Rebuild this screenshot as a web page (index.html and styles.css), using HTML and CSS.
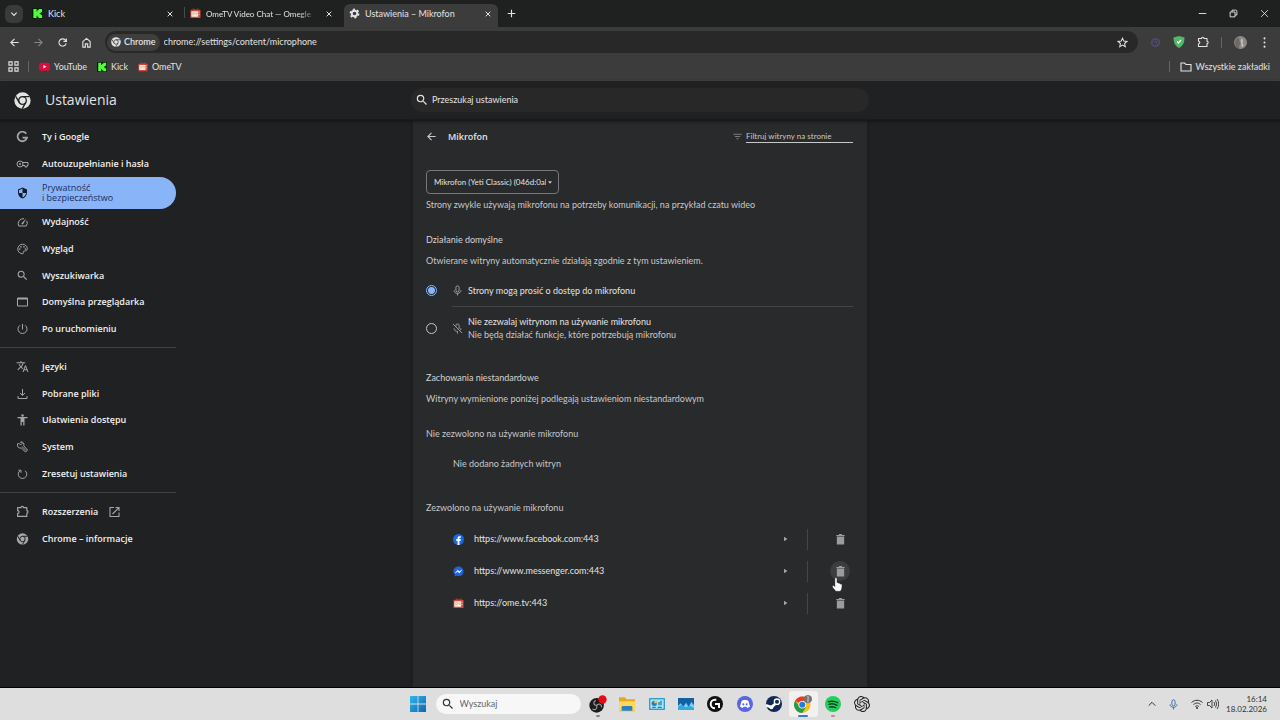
FILE: index.html
```html
<!DOCTYPE html>
<html lang="pl">
<head>
<meta charset="utf-8">
<meta name="viewport" content="width=device-width, initial-scale=1">
<title>Ustawienia – Mikrofon</title>
<link rel="stylesheet" href="styles.css">
</head>
<body>
<svg class="defs" aria-hidden="true">
  <symbol id="close" viewBox="0 0 24 24"><path d="M5 5l14 14M19 5L5 19" fill="none" stroke="currentColor" stroke-width="3"/></symbol>
  <symbol id="back" viewBox="0 0 24 24"><path d="M21 12H4M12 4l-8 8 8 8" fill="none" stroke="currentColor" stroke-width="2.4"/></symbol>
  <symbol id="chrome" viewBox="0 0 24 24"><circle cx="12" cy="12" r="11.500" fill="currentColor"/><g fill="none" stroke="var(--cut)" stroke-width="1.900"><circle cx="12" cy="12" r="5.400"/><path d="M12 6.600h10M16.700 14.700l-5 8.700M7.300 14.700l-5-8.700"/></g></symbol>
  <symbol id="search" viewBox="0 0 24 24"><path d="M15.5 14h-.79l-.28-.27A6.47 6.47 0 0 0 16 9.5 6.5 6.5 0 1 0 9.5 16c1.61 0 3.09-.59 4.23-1.57l.27.28v.79l5 4.99L20.49 19l-4.99-5zm-6 0C7.01 14 5 11.99 5 9.5S7.01 5 9.5 5 14 7.01 14 9.5 11.99 14 9.5 14z" fill="currentColor"/></symbol>
  <symbol id="puzzle" viewBox="0 0 24 24"><path d="M3 5h6c0-3.500 5-3.500 5 0h6v5.500c3 0 3 4.500 0 4.500v6H3v-5.500c3.500 0 3.500-5 0-5z" fill="none" stroke="currentColor" stroke-width="2.200" stroke-linejoin="round"/></symbol>
  <symbol id="kick" viewBox="0 0 24 24"><rect width="24" height="24" rx="2" fill="#051c04"/><path d="M3 2h7v5h2V4h3V2h7v7h-3v2h-2v2h2v2h3v7h-7v-2h-3v-3h-2v5H3z" fill="#53fc3b"/></symbol>
  <symbol id="ometv" viewBox="0 0 24 24"><path d="M7 1l4 4h3l4-4" fill="none" stroke="#d84b3e" stroke-width="2"/><rect x="1" y="4" width="22" height="18" rx="2" fill="#cf4a3c"/><rect x="3" y="7" width="15" height="12" rx="1" fill="#fff0df"/><path d="M5 10h3v5H5zM10 15v-5l2 3 2-3v5M16 10v5" fill="none" stroke="#e5a48f" stroke-width="1.200"/><path d="M20 8v2M20 13v2" stroke="#ffd6c9" stroke-width="2"/></symbol>
  <symbol id="mic" viewBox="0 0 24 24"><rect x="8.500" y="2" width="7" height="13" rx="3.500" fill="none" stroke="currentColor" stroke-width="2"/><path d="M4.500 11.500c0 9 15 9 15 0M12 18v5" fill="none" stroke="currentColor" stroke-width="2"/></symbol>
  <symbol id="trash" viewBox="0 0 24 24"><path d="M3 2h5l1-2h6l1 2h5v3H3zM4 6h16v17H4z" fill="currentColor"/></symbol>
  <symbol id="caret" viewBox="0 0 24 24"><path d="M5 1l16 11L5 23z" fill="currentColor"/></symbol>
</svg>

<header class="browser">
  <div class="tabstrip">
    <button class="tab-search" aria-label="Wyszukaj karty"><svg class="i8" viewBox="0 0 24 24"><path d="M4 8l8 8 8-8" fill="none" stroke="currentColor" stroke-width="3.500"/></svg></button>
    <div class="tab"><svg class="i11"><use href="#kick"/></svg><span class="tab-title">Kick</span><button class="plain" aria-label="Zamknij Kick"><svg class="i8"><use href="#close"/></svg></button></div>
    <div class="tab second"><svg class="i11"><use href="#ometv"/></svg><span class="tab-title fade">OmeTV Video Chat — Omegle</span><button class="plain" aria-label="Zamknij OmeTV"><svg class="i8"><use href="#close"/></svg></button></div>
    <div class="tab active"><svg class="i11" viewBox="0 0 24 24"><circle cx="12" cy="12" r="6" fill="none" stroke="currentColor" stroke-width="4"/><circle cx="12" cy="12" r="9" fill="none" stroke="currentColor" stroke-width="3.500" stroke-dasharray="4.700 4.700"/></svg><span class="tab-title">Ustawienia – Mikrofon</span><button class="plain" aria-label="Zamknij Ustawienia"><svg class="i8"><use href="#close"/></svg></button></div>
    <button class="plain new-tab" aria-label="Nowa karta"><svg class="i9" viewBox="0 0 24 24"><path d="M12 2v20M2 12h20" stroke="currentColor" stroke-width="3"/></svg></button>
    <div class="window-controls">
      <button class="plain" aria-label="Minimalizuj"><svg class="i9" viewBox="0 0 24 24"><path d="M2 12h20" stroke="currentColor" stroke-width="2.500"/></svg></button>
      <button class="plain" aria-label="Przywróć"><svg class="i9" viewBox="0 0 24 24"><path d="M3 8h13v13H3zM8 8V3h10c2 0 3 1 3 3v10h-5" fill="none" stroke="currentColor" stroke-width="2.500"/></svg></button>
      <button class="plain" aria-label="Zamknij"><svg class="i9" viewBox="0 0 24 24"><path d="M3 3l18 18M21 3L3 21" stroke="currentColor" stroke-width="2.300"/></svg></button>
    </div>
  </div>
  <div class="toolbar">
    <div class="nav">
      <button class="plain" aria-label="Wstecz"><svg class="i11"><use href="#back"/></svg></button>
      <button class="plain off flip" aria-label="Dalej"><svg class="i11"><use href="#back"/></svg></button>
      <button class="plain" aria-label="Odśwież"><svg class="i11" viewBox="0 0 24 24"><path d="M20 14a8 8 0 1 1-2-7.500L20 9M20.500 3v6.500H14" fill="none" stroke="currentColor" stroke-width="2.400"/></svg></button>
      <button class="plain" aria-label="Strona główna"><svg class="i11" viewBox="0 0 24 24"><path d="M4 10l8-7 8 7v12h-5.500v-7h-5v7H4z" fill="none" stroke="currentColor" stroke-width="2.400"/></svg></button>
    </div>
    <div class="omnibox">
      <span class="chip"><svg class="i10"><use href="#chrome"/></svg>Chrome</span>
      <input class="url" aria-label="Adres" value="chrome://settings/content/microphone">
      <button class="plain" aria-label="Dodaj do zakładek"><svg class="i11" viewBox="0 0 24 24"><path d="M12 2.500l2.800 6.400 7 .7-5.300 4.600 1.600 6.800-6.100-3.600L5.900 21l1.600-6.800-5.300-4.600 7-.7z" fill="none" stroke="currentColor" stroke-width="2.200"/></svg></button>
    </div>
    <div class="extensions">
      <svg class="i11" viewBox="0 0 24 24"><circle cx="12" cy="12" r="8" fill="#3a3945" stroke="#504b68" stroke-width="4"/><path d="M9 12a3 3 0 1 1 3 3" fill="none" stroke="#62597c" stroke-width="2"/></svg>
      <svg class="i12" viewBox="0 0 24 24"><path d="M12 0l11 3c0 10-3 17-11 21C4 20 1 13 1 3z" fill="#50b866"/><path d="M8 11l3 3 5-6" fill="none" stroke="#fff" stroke-width="2.500"/></svg>
      <button class="plain" aria-label="Rozszerzenia"><svg class="i12"><use href="#puzzle"/></svg></button>
      <span class="vline"></span>
      <button class="plain" aria-label="Profil"><svg class="i13" viewBox="0 0 24 24"><circle cx="12" cy="12" r="12" fill="#8d8985"/><path d="M7 3c5 1 2 5 4 8s-3 6-1 12H8C0 19 0 8 7 3z" fill="#6d6966"/><path d="M14 4c4 4 1 7 3 11s-2 5-3 5 1-6-1-9 1-4 1-7z" fill="#c8c3bd"/></svg></button>
      <button class="plain" aria-label="Menu"><svg class="i11" viewBox="0 0 24 24"><g fill="currentColor"><circle cx="12" cy="3" r="2.200"/><circle cx="12" cy="12" r="2.200"/><circle cx="12" cy="21" r="2.200"/></g></svg></button>
    </div>
  </div>
  <nav class="bookmarks" aria-label="Zakładki">
    <button class="plain" aria-label="Aplikacje"><svg class="i11" viewBox="0 0 24 24"><path d="M2 2h7v7H2zM15 2h7v7h-7zM2 15h7v7H2zM15 15h7v7h-7z" fill="none" stroke="currentColor" stroke-width="2.400"/></svg></button>
    <span class="vline"></span>
    <a href="#"><svg class="i11" viewBox="0 0 24 24"><rect x="0" y="4" width="24" height="17" rx="4" fill="#e0093a"/><path d="M9.500 8.500v8l7-4z" fill="#fff"/></svg>YouTube</a>
    <a href="#"><svg class="i10"><use href="#kick"/></svg>Kick</a>
    <a href="#"><svg class="i10"><use href="#ometv"/></svg>OmeTV</a>
    <span class="spacer"></span>
    <span class="vline"></span>
    <a class="all" href="#"><svg class="i12" viewBox="0 0 24 24"><path d="M2 4h7l3 3h10v13H2z" fill="none" stroke="currentColor" stroke-width="2.200"/></svg>Wszystkie zakładki</a>
  </nav>
</header>

<div class="app-header">
  <div class="brand"><svg class="i17"><use href="#chrome"/></svg><h1>Ustawienia</h1></div>
  <label class="search"><svg class="i14"><use href="#search"/></svg><input type="search" placeholder="Przeszukaj ustawienia" aria-label="Przeszukaj ustawienia"></label>
</div>

<div class="page">
  <nav class="sidebar" aria-label="Ustawienia">
    <div class="group first">
      <a href="#"><svg class="i12" viewBox="0 0 24 24"><path d="M19.500 5.500A9.500 9.500 0 1 0 21 13h-9" fill="none" stroke="currentColor" stroke-width="3.500"/></svg>Ty i Google</a>
      <a href="#"><svg class="i12" viewBox="0 0 24 24"><circle cx="7" cy="12" r="6" fill="none" stroke="currentColor" stroke-width="2"/><circle cx="7" cy="12" r="2" fill="currentColor"/><path d="M12.500 9H23v6h-2v3h-4v-3h-4.500" fill="none" stroke="currentColor" stroke-width="2"/></svg>Autouzupełnianie i hasła</a>
    </div>
    <a class="current" href="#" aria-current="page"><svg class="i12" viewBox="0 0 24 24"><path d="M12 1L3 5v6c0 5.550 3.840 10.740 9 12 5.160-1.260 9-6.450 9-12V5zm0 11h7c-.5 4-3.200 7.800-7 9v-9H5V6.300l7-3.100z" fill="currentColor"/></svg><span>Prywatność<br>i bezpieczeństwo</span></a>
    <div class="group">
      <a href="#"><svg class="i12" viewBox="0 0 24 24"><path d="M15 5.500A10 10 0 0 0 4.500 20h15a10 10 0 0 0 1-10.500" fill="none" stroke="currentColor" stroke-width="2"/><path d="M10.500 14l9-9-6 11c-2 2-5 0-3-2z" fill="currentColor"/></svg>Wydajność</a>
      <a href="#"><svg class="i12" viewBox="0 0 24 24"><path d="M12 2.500a9.500 9.500 0 0 0 0 19c3 0 1-3 1.500-4.500 1-2 8 1 8-6 0-5-4.500-8.500-9.500-8.500z" fill="none" stroke="currentColor" stroke-width="2"/><g fill="currentColor"><circle cx="6.500" cy="12" r="1.700"/><circle cx="9" cy="7.500" r="1.700"/><circle cx="15" cy="7.500" r="1.700"/><circle cx="18" cy="12" r="1.700"/></g></svg>Wygląd</a>
      <a href="#"><svg class="i13"><use href="#search"/></svg>Wyszukiwarka</a>
      <a href="#"><svg class="i12" viewBox="0 0 24 24"><path d="M2 4h20v16H2z" fill="none" stroke="currentColor" stroke-width="2"/><path d="M2 5.500h20" stroke="currentColor" stroke-width="3"/></svg>Domyślna przeglądarka</a>
      <a href="#"><svg class="i12" viewBox="0 0 24 24"><path d="M12 2v11M7 4.500a9 9 0 1 0 10 0" fill="none" stroke="currentColor" stroke-width="2"/></svg>Po uruchomieniu</a>
    </div>
    <hr>
    <div class="group tools">
      <a href="#"><svg class="i13" viewBox="0 0 24 24"><path d="M12.870 15.070l-2.540-2.510.03-.03A17.520 17.520 0 0 0 14.070 6H17V4h-7V2H8v2H1v2h11.170C11.500 7.920 10.440 9.750 9 11.350 8.070 10.320 7.300 9.190 6.690 8h-2c.73 1.630 1.730 3.170 2.980 4.560l-5.090 5.020L4 19l5-5 3.110 3.110zM18.500 10h-2L12 22h2l1.120-3h4.750L21 22h2zm-2.620 7l1.620-4.330L19.120 17z" fill="currentColor"/></svg>Języki</a>
      <a href="#"><svg class="i12" viewBox="0 0 24 24"><path d="M12 2v12M7 10l5 5 5-5M3 16v5h18v-5" fill="none" stroke="currentColor" stroke-width="2"/></svg>Pobrane pliki</a>
      <a href="#"><svg class="i12" viewBox="0 0 24 24"><circle cx="12" cy="3" r="2.500" fill="currentColor"/><path d="M2 6h20v2.500h-6V23h-2.500v-7h-3v7H8V8.500H2z" fill="currentColor"/></svg>Ułatwienia dostępu</a>
      <a href="#"><svg class="i12" viewBox="0 0 24 24"><path d="M4 4l4 4 3-3-3-3c5-1 8 3 6.500 7.500L22 18l-4 4-8.500-8C4 15 1 11 2 6z" fill="none" stroke="currentColor" stroke-width="2"/><path d="M11 11l8 8" stroke="currentColor" stroke-width="2"/></svg>System</a>
      <a href="#"><svg class="i12" viewBox="0 0 24 24"><path d="M7 5.500A8.500 8.500 0 1 0 17 5.500M4 4.500h5v5" fill="none" stroke="currentColor" stroke-width="2"/></svg>Zresetuj ustawienia</a>
    </div>
    <hr>
    <div class="group last">
      <a href="#"><svg class="i13"><use href="#puzzle"/></svg>Rozszerzenia<svg class="i12" viewBox="0 0 24 24"><path d="M11 3H3v18h18v-8M14 3h7v7M21 3L8 16" fill="none" stroke="currentColor" stroke-width="2.200"/></svg></a>
      <a href="#"><svg class="i12"><use href="#chrome"/></svg>Chrome – informacje</a>
    </div>
  </nav>

  <main class="card">
    <div class="card-head">
      <button class="plain" aria-label="Wstecz"><svg class="i11"><use href="#back"/></svg></button>
      <h2>Mikrofon</h2>
      <label class="filter"><svg class="i9" viewBox="0 0 24 24"><path d="M1 6h22M5 12h14M9 18h6" stroke="currentColor" stroke-width="2.400"/></svg><input type="text" placeholder="Filtruj witryny na stronie" aria-label="Filtruj witryny na stronie"></label>
    </div>
    <div class="select"><select aria-label="Mikrofon"><option>Mikrofon (Yeti Classic) (046d:0ab7)</option></select><svg viewBox="0 0 10 6"><path d="M0 0h10L5 6z" fill="currentColor"/></svg></div>
    <p class="intro">Strony zwykle używają mikrofonu na potrzeby komunikacji, na przykład czatu wideo</p>

    <h3>Działanie domyślne</h3>
    <p>Otwierane witryny automatycznie działają zgodnie z tym ustawieniem.</p>
    <div class="options">
      <label class="option"><input type="radio" name="mic" checked><span class="option-body ruled"><svg class="i11"><use href="#mic"/></svg><span>Strony mogą prosić o dostęp do mikrofonu</span></span></label>
      <label class="option"><input type="radio" name="mic"><span class="option-body"><svg class="i11" viewBox="0 0 24 24"><use href="#mic" width="24" height="24"/><path d="M2 4l19 19" stroke="#292a2b" stroke-width="5"/><path d="M2 2l20 20" stroke="currentColor" stroke-width="2"/></svg><span>Nie zezwalaj witrynom na używanie mikrofonu<small>Nie będą działać funkcje, które potrzebują mikrofonu</small></span></span></label>
    </div>

    <h3>Zachowania niestandardowe</h3>
    <p>Witryny wymienione poniżej podlegają ustawieniom niestandardowym</p>
    <h4>Nie zezwolono na używanie mikrofonu</h4>
    <p class="empty">Nie dodano żadnych witryn</p>
    <h4 class="allowed">Zezwolono na używanie mikrofonu</h4>
    <ul class="sites">
      <li><svg class="i11" viewBox="0 0 24 24"><circle cx="12" cy="12" r="12" fill="#1769e0"/><path d="M10 24v-9H7v-4h3V9c0-4 2-5 7-4v3c-3 0-3 0-3 3h3l-.6 4H14v9z" fill="#fff"/></svg><span>https://www.facebook.com:443</span><button class="plain" aria-label="Szczegóły facebook.com"><svg class="caret"><use href="#caret"/></svg></button><span class="vline"></span><button class="delete" aria-label="Usuń facebook.com"><svg class="i11"><use href="#trash"/></svg></button></li>
      <li><svg class="i11" viewBox="0 0 24 24"><path d="M12 1C5 1 1 6 1 12c0 3 1 5 3 7v4l4-2c9 3 15-2 15-9S18 1 12 1z" fill="#1f63e3"/><path d="M5 15l5-6 4 3 5-3-5 6-4-3z" fill="#fff" stroke="#fff"/></svg><span>https://www.messenger.com:443</span><button class="plain" aria-label="Szczegóły messenger.com"><svg class="caret"><use href="#caret"/></svg></button><span class="vline"></span><button class="delete hovered" aria-label="Usuń messenger.com"><svg class="i11"><use href="#trash"/></svg><svg class="pointer" viewBox="0 0 24 36"><path d="M7 3c0-3 5-3 5 0v10c1-2 4-1 4 1 1-1 4 0 4 2 2-1 4 0 4 2 0 8-1 11-4 15H9C6 28 1 25 1 21c0-3 4-2 6 1z" fill="#fff" stroke="#222" stroke-width="1"/></svg></button></li>
      <li><svg class="i11"><use href="#ometv"/></svg><span>https://ome.tv:443</span><button class="plain" aria-label="Szczegóły ome.tv"><svg class="caret"><use href="#caret"/></svg></button><span class="vline"></span><button class="delete" aria-label="Usuń ome.tv"><svg class="i11"><use href="#trash"/></svg></button></li>
    </ul>
  </main>
</div>

<footer class="taskbar">
  <div class="dock">
    <button class="task start" aria-label="Start"><svg class="i16" viewBox="0 0 24 24"><defs><linearGradient id="win" x2="1" y2="1"><stop stop-color="#35b5e8"/><stop offset="1" stop-color="#0868b8"/></linearGradient></defs><path d="M0 0h11.400v11.400H0zM12.600 0H24v11.400H12.600zM0 12.600h11.400V24H0zM12.600 12.600H24V24H12.600z" fill="url(#win)"/></svg></button>
    <label class="task-search"><svg class="i14"><use href="#search"/></svg><input type="search" placeholder="Wyszukaj" aria-label="Wyszukaj"></label>
    <div class="apps">
      <button class="task running" aria-label="OBS"><svg class="i18" viewBox="0 0 26 26"><circle cx="11" cy="15" r="10.500" fill="#1c1c1c"/><path d="M11 15c-5 0-5-6-1-7M11 15c3-4 8-1 7 3M11 15c2 4-2 8-6 5" fill="none" stroke="#999" stroke-width="1.700"/><circle cx="19.500" cy="6.500" r="6" fill="#e40b16"/></svg></button>
      <button class="task" aria-label="Eksplorator"><svg class="i16" viewBox="0 0 24 24"><path d="M0 2h9l2 3h13v18H0z" fill="#e9a71d"/><path d="M0 8h24v14H0z" fill="#ffd75b"/><path d="M4 22v-5q0-2 2-2h12q2 0 2 2v5z" fill="#2583c4"/></svg></button>
      <button class="task" aria-label="Panel sterowania"><svg class="i16" viewBox="0 0 24 24"><rect x="0" y="3" width="24" height="18" rx="1" fill="#2f9fc9"/><rect x="2" y="5" width="20" height="14" fill="#a9e3f5"/><circle cx="8" cy="11" r="4" fill="#277fb0"/><path d="M8 11V7a4 4 0 0 1 4 4z" fill="#ffbd5b"/><path d="M15 14V9M18 14V7M5 17h5M13 17h6" stroke="#277fb0" stroke-width="2"/></svg></button>
      <button class="task" aria-label="Monitor"><svg class="i16" viewBox="0 0 24 24"><path d="M0 3h24v18H0z" fill="#75d0f3"/><path d="M0 3h24v11l-4-5-4 7-4-6-4 6-4-5-4 4z" fill="#1261a5"/><path d="M0 16l5-3 6 4 7-2 6 3v3H0z" fill="#36a8df"/></svg></button>
      <button class="task" aria-label="Logitech G HUB"><svg class="i16" viewBox="0 0 24 24"><circle cx="12" cy="12" r="12" fill="#101010"/><path d="M14 5.500h-2a6.500 6.500 0 0 0 0 13M12 12h6v6" fill="none" stroke="#fff" stroke-width="3"/></svg></button>
      <button class="task" aria-label="Discord"><svg class="i16" viewBox="0 0 24 24"><circle cx="12" cy="12" r="12" fill="#5865e5"/><path d="M7 7l3-1h4l3 1 2.500 9-4 2-1.500-2h-4l-1.500 2-4-2z" fill="#fff"/><circle cx="9.500" cy="12.500" r="1.600" fill="#5865e5"/><circle cx="14.500" cy="12.500" r="1.600" fill="#5865e5"/></svg></button>
      <button class="task" aria-label="Steam"><svg class="i16" viewBox="0 0 24 24"><circle cx="12" cy="12" r="12" fill="#102a55"/><path d="M0 14l8 3 9-8" fill="none" stroke="#fff" stroke-width="4"/><circle cx="16.500" cy="8.500" r="4" fill="#102a55" stroke="#fff" stroke-width="2"/><circle cx="8" cy="17" r="3" fill="#fff"/></svg></button>
      <button class="task selected" aria-label="Chrome"><svg class="i18" viewBox="0 0 24 24"><circle cx="11" cy="13" r="11" fill="#fbc116"/><path d="M11 13L1.500 7.500A11 11 0 0 1 20.500 7.500H11z" fill="#e33b2e"/><path d="M1.500 7.500A11 11 0 0 0 11 24l5-8-9-1z" fill="#229a50"/><circle cx="11" cy="13" r="5" fill="#fff"/><circle cx="11" cy="13" r="4" fill="#267bdc"/><circle cx="18.500" cy="5.500" r="5.500" fill="#77706c"/><path d="M18 1c3 3-1 5 1 9" fill="none" stroke="#b8b1aa" stroke-width="2"/></svg></button>
      <button class="task running pink" aria-label="Spotify"><svg class="i16" viewBox="0 0 24 24"><circle cx="12" cy="12" r="12" fill="#23cf5f"/><path d="M5 8.500q8-2 14 1.500M6 12.500q6-2 12 1.500M7 16.500q5-1 9 1" fill="none" stroke="#083f1d" stroke-width="2.200" stroke-linecap="round"/></svg></button>
      <button class="task" aria-label="ChatGPT"><svg class="i16" viewBox="0 0 24 24"><path d="M22.280 9.820a5.980 5.980 0 0 0-.52-4.910 6.050 6.050 0 0 0-6.510-2.900A6.070 6.070 0 0 0 4.980 4.180a5.980 5.980 0 0 0-4 2.900 6.050 6.050 0 0 0 .75 7.100 5.980 5.980 0 0 0 .51 4.910 6.050 6.050 0 0 0 6.510 2.900A5.980 5.980 0 0 0 13.260 24a6.060 6.060 0 0 0 5.770-4.210 5.990 5.990 0 0 0 4-2.900 6.060 6.060 0 0 0-.75-7.070zm-9.020 12.610a4.480 4.480 0 0 1-2.880-1.040l.14-.08 4.780-2.760a.8.8 0 0 0 .39-.68v-6.740l2.020 1.170.04.05v5.580a4.500 4.500 0 0 1-4.490 4.500zM3.600 18.300a4.470 4.470 0 0 1-.54-3.010l.14.090 4.780 2.760a.77.77 0 0 0 .78 0l5.850-3.370v2.330l-.04.060-4.830 2.790A4.500 4.500 0 0 1 3.600 18.300zM2.340 7.900a4.490 4.490 0 0 1 2.370-1.970V11.600a.77.77 0 0 0 .39.68l5.810 3.350-2.020 1.170h-.07l-4.830-2.790A4.500 4.500 0 0 1 2.340 7.900zm16.600 3.860L13.100 8.360 15.120 7.200h.07l4.830 2.790a4.490 4.490 0 0 1-.68 8.100v-5.680a.79.79 0 0 0-.4-.65zm2.010-3.020l-.14-.09-4.770-2.780a.78.780 0 0 0-.79 0L9.410 9.230V6.900l.03-.06 4.830-2.790a4.500 4.500 0 0 1 6.680 4.660zM8.310 12.860l-2.020-1.160-.04-.06V6.070a4.500 4.500 0 0 1 7.380-3.450l-.14.080L8.710 5.460a.8.800 0 0 0-.4.680zm1.090-2.360L12 9l2.610 1.500v3L12 15l-2.600-1.500z" fill="#222"/></svg></button>
    </div>
  </div>
  <div class="tray">
    <svg class="i8" viewBox="0 0 24 24"><path d="M2 17L12 7l10 10" fill="none" stroke="currentColor" stroke-width="3"/></svg>
    <svg class="i11 tray-mic"><use href="#mic"/></svg>
    <svg class="i12" viewBox="0 0 24 24"><path d="M1 9c7-6 15-6 22 0M5 13c5-4 9-4 14 0M8.500 17c3-2 4-2 7 0" fill="none" stroke="currentColor" stroke-width="2"/><circle cx="12" cy="20" r="2" fill="currentColor"/></svg>
    <svg class="i12" viewBox="0 0 24 24"><path d="M1 9h4l5-5v16l-5-5H1zM14 8q3 4 0 8M17 5q5 7 0 14M20 2q7 10 0 20" fill="none" stroke="currentColor" stroke-width="1.800"/></svg>
    <time>16:14<br>18.02.2026</time>
  </div>
</footer>
</body>
</html>
```
FILE: styles.css
```css
* { box-sizing: border-box; }
body {
  --cut: #202122;
  margin: 0;
  min-height: 100vh;
  display: flex;
  flex-direction: column;
  background: #202122;
  color: #e3e3e3;
  font: 9px/12px Lato, "Noto Sans", sans-serif;
}
h1, h2, h3, h4, p, ul { margin: 0; padding: 0; }
ul { list-style: none; }
a { color: inherit; text-decoration: none; }
svg { display: block; flex: none; }
input, select, button { font: inherit; color: inherit; margin: 0; }
input::placeholder { color: inherit; opacity: 1; }
input[type="search"], input[type="text"], .url {
  min-width: 0; flex: 1; padding: 0; border: 0; outline: 0; background: none; appearance: none;
}
.defs { position: absolute; width: 0; height: 0; }
.i8 { width: 8px; height: 8px; }
.i9 { width: 9px; height: 9px; }
.i10 { width: 10px; height: 10px; }
.i11 { width: 11px; height: 11px; }
.i12 { width: 12px; height: 12px; }
.i13 { width: 13px; height: 13px; }
.i14 { width: 14px; height: 14px; }
.i16 { width: 16px; height: 16px; }
.i17 { width: 17px; height: 17px; }
.i18 { width: 18px; height: 18px; }
.plain { display: grid; place-items: center; padding: 0; border: 0; background: none; }
.vline { width: 1px; height: 11px; background: #656565; }
.spacer { flex: 1; }

.browser { background: #3c3c3c; border-bottom: 1px solid #484848; }
.tabstrip { display: flex; align-items: center; height: 27px; padding-left: 5px; background: #1f2020; }
.tab-search { display: grid; place-items: center; width: 18px; height: 18px; padding: 0; border: 0; border-radius: 6px; background: #3a3a3a; }
.tab { display: flex; align-items: center; gap: 5px; flex: 0 1 161px; min-width: 0; height: 23px; margin-top: 4px; padding: 0 10px 4px 9px; }
.tab.second { flex-basis: 158px; padding: 0 9px 4px 5px; border-left: 1px solid transparent; border-image: linear-gradient(transparent 4px, #4a4a4a 4px 14px, transparent 14px) 1; }
.tab.active { flex-basis: 154px; margin-left: 2px; padding: 0 6px 4px 5px; border-radius: 6px 6px 0 0; background: #3c3c3c; }
.tab-title { flex: 1; min-width: 0; overflow: hidden; white-space: nowrap; }
.fade { font-size: 8px; mask-image: linear-gradient(90deg, #000 80%, transparent); }
.new-tab { margin-left: 9px; }
.window-controls { display: flex; gap: 22px; margin-left: auto; padding-right: 11px; }

.toolbar { display: flex; align-items: center; padding: 4px 10px 0 9px; }
.nav { display: flex; gap: 13px; width: 96px; }
.off { color: #858585; }
.flip { transform: scaleX(-1); }
.omnibox { --cut: #3c3c3c; display: flex; align-items: center; flex: 1; height: 22px; padding: 0 10px 0 2px; border-radius: 11px; background: #282828; }
.chip { display: flex; align-items: center; gap: 3px; height: 17px; margin-right: 4px; padding: 0 4px; border-radius: 9px; background: #3e3e3e; font-weight: 600; }
.extensions { display: flex; align-items: center; gap: 12px; padding-left: 12px; }
.bookmarks { display: flex; align-items: center; height: 27px; padding: 0 10px 0 8px; }
.bookmarks a { display: flex; align-items: center; gap: 4px; margin-left: 10px; }
.bookmarks .vline { margin-left: 9px; }

.app-header, .page { display: grid; grid-template-columns: 1fr minmax(0, 458px) 1fr; }
.app-header { height: 39px; align-items: center; border-bottom: 1px solid #191a1b; box-shadow: 0 1px 3px #111; z-index: 1; }
.brand { display: flex; align-items: center; gap: 14px; padding-left: 14px; }
.brand h1 { font: 400 14px/20px "Open Sans", "Noto Sans", sans-serif; }
.search { display: flex; align-items: center; gap: 3px; height: 24px; padding: 0 5px 0 4px; border-radius: 12px; background: #282828; }

.page { flex: 1; grid-template-columns: 1fr minmax(0, 454px) 1fr; }
.sidebar { max-width: 176px; padding-top: 3px; color: #f1f1f1; font-family: "Open Sans", "Noto Sans", sans-serif; font-weight: 600; }
.sidebar a { flex: 1; display: flex; align-items: center; padding-left: 16px; }
.sidebar a > svg { width: 13px; margin-right: 13px; color: #a4a6a9; }
.sidebar a > svg + svg { margin: 0 0 0 10px; }
.group { display: flex; flex-direction: column; min-height: 133px; }
.group.first, .group.last { min-height: 54px; }
.group.tools { min-height: 134px; }
.sidebar .current { height: 32px; border-radius: 0 16px 16px 0; background: #8ab4f8; color: #172f5c; line-height: 10px; font-weight: 400; }
.sidebar .current > svg { color: #101b2d; }
.sidebar hr { margin: 5px 0; border: 0; border-top: 1px solid #424345; }

.card { padding: 0 14px 0 13px; background: #292a2b; box-shadow: 0 0 3px #18191a; color: #c7c8ca; }
.card-head { display: flex; align-items: center; height: 33px; margin-bottom: 17px; }
.card-head h2 { margin-left: 11px; color: #e3e3e3; font: 600 9px/14px "Open Sans", "Noto Sans", sans-serif; }
.filter { display: flex; align-items: center; gap: 4px; margin-left: auto; }
.filter svg { color: #858789; }
.filter input { width: 107px; height: 12px; flex: none; border-bottom: 1px solid #c7c8ca; font-size: 8px; line-height: 10px; }
.select { position: relative; width: 133px; }
.select select { width: 100%; height: 24px; padding: 0 12px 0 7px; border: 1px solid #75777a; border-radius: 4px; background: none; color: #e3e3e3; font-size: 8px; appearance: none; }
.select svg { position: absolute; right: 7px; top: 11px; width: 4px; height: 3px; }
.intro { margin-top: 5px; }
h3, h4 { margin: 23px 0 9px; font-size: 9px; line-height: 12px; font-weight: 400; }
h3 { color: #d3d4d6; }
.options { margin-top: 7px; }
.option { display: flex; align-items: center; gap: 15px; color: #e3e3e3; line-height: 13px; }
.option input { appearance: none; flex: none; width: 11px; height: 11px; border: 1px solid #c7c8ca; border-radius: 50%; }
.option input:checked { border-color: #8ab4f8; background: radial-gradient(#8ab4f8 0 3px, transparent 4px); }
.option-body { flex: 1; display: flex; align-items: center; gap: 5px; min-height: 42px; }
.option-body.ruled { min-height: 33px; border-bottom: 1px solid #444547; }
.option-body svg { color: #a4a6a9; }
.option small { display: block; color: #c7c8ca; font-size: 9px; }
.empty { margin: 18px 0 32px 27px; }
.allowed { margin-top: 0; }
.sites { color: #e3e3e3; }
.sites li { display: flex; align-items: center; height: 32px; padding: 0 3px 0 27px; }
.sites li > span:nth-child(2) { flex: 1; margin-left: 10px; }
.sites .vline { height: 21px; margin: 0 22px 0 19px; background: #444547; }
.caret { width: 5px; height: 6px; color: #a9abad; }
.delete { position: relative; display: grid; place-items: center; width: 20px; height: 20px; padding: 0; border: 0; border-radius: 50%; background: none; color: #9a9c9e; }
.hovered { background: #3c3d3e; }
.pointer { position: absolute; z-index: 1; left: 2px; top: 16px; width: 10px; height: 16px; }

.taskbar { display: grid; grid-template-columns: 1fr auto 1fr; align-items: center; height: 33px; border-top: 1px solid #000; background: #dedede; color: #333; }
.dock { grid-column: 2; display: flex; align-items: center; gap: 3px; }
.task { position: relative; flex: 1; display: grid; place-items: center; height: 26px; padding: 0; border: 0; border-radius: 3px; background: none; }
.task.start { flex: none; width: 29px; }
.task-search { display: flex; align-items: center; gap: 5px; width: 145px; height: 20px; padding: 0 5px; border-radius: 10px; background: #f7f7f7; }
.task-search input { color: #666; }
.apps { display: flex; width: 293px; }
.running::after, .selected::after { content: ""; position: absolute; bottom: 0; width: 4px; height: 2px; border-radius: 1px; background: #888; }
.pink::after { background: #c18b98; }
.selected { background: #f3f1ef; }
.selected::after { width: 10px; background: #3978d0; }
.tray { display: flex; align-items: center; justify-content: flex-end; gap: 4px; padding-right: 13px; }
.tray svg:first-child, .tray-mic { margin-right: 8px; }
.tray-mic { color: #3566b0; }
.tray time { margin-left: 3px; text-align: right; font-size: 8px; line-height: 10px; }
```
